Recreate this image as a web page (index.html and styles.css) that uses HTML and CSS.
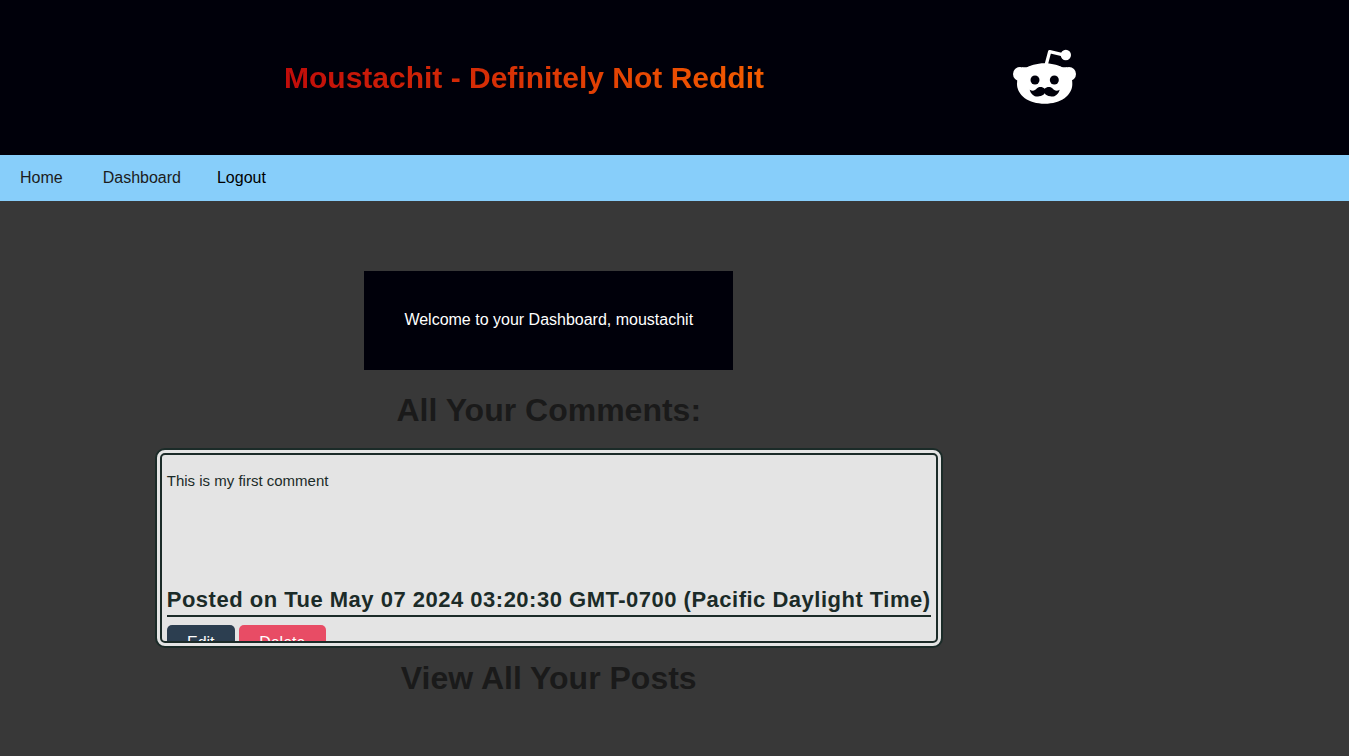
FILE: index.html
```html
<!DOCTYPE html>
<html lang="en">
<head>
<meta charset="utf-8">
<title>Moustachit</title>
<link rel="stylesheet" href="styles.css">
</head>
<body>
<header class="header">
  <h1 class="title">Moustachit - Definitely Not Reddit</h1>
  <svg class="logo" viewBox="0 0 270 225" aria-hidden="true">
    <path class="antenna" d="M138 76 149 35 187 44"/>
    <circle cx="197.500" cy="45" r="15.500"/>
    <circle cx="60" cy="102" r="21"/>
    <circle cx="207" cy="102" r="21"/>
    <path d="M134 70C182 70 217 96 217 131C217 166 182 191 134 191C86 191 51 166 51 131C51 96 86 70 134 70Z"/>
    <path d="M66 82H80L92 78 68 120ZM188 82H202L200 120 176 78Z"/>
    <circle class="face" cx="105" cy="120" r="13.500"/>
    <circle class="face" cx="163" cy="120" r="13.500"/>
    <path class="face" d="M134 146C128 140 117 139 111 145C105 152 98 155 89 149C93 164 105 172 117 169C125 168 131 165 134 160C137 165 143 168 151 169C163 172 175 164 179 149C170 155 163 152 157 145C151 139 140 140 134 146Z"/>
  </svg>
</header>
<nav class="nav">
  <a class="nav-link">Home</a>
  <a class="nav-link">Dashboard</a>
  <button class="logout">Logout</button>
</nav>
<main class="dashboard">
  <p class="welcome">Welcome to your Dashboard, moustachit</p>
  <h2 class="heading">All Your Comments:</h2>
  <article class="comment">
    <p class="comment-text">This is my first comment</p>
    <h3 class="posted">Posted on Tue May 07 2024 03:20:30 GMT-0700 (Pacific Daylight Time)</h3>
    <div class="actions">
      <button class="btn edit">Edit</button>
      <button class="btn delete">Delete</button>
    </div>
  </article>
  <h2 class="heading posts">View All Your Posts</h2>
</main>
</body>
</html>
```
FILE: styles.css
```css
* { box-sizing: border-box; margin: 0; }
body {
  font-family: "Liberation Sans", Arial, sans-serif;
  font-size: 16px;
  background: #383838;
  height: 756px;
  overflow: hidden;
}
.header {
  display: flex;
  align-items: center;
  height: 155px;
  padding-left: 284px;
  background: #00000a;
}
.title {
  font-size: 30px;
  line-height: 36px;
  white-space: nowrap;
  width: 480px;
  color: transparent;
  background: linear-gradient(to right, #c00c0a, #f45c00);
  -webkit-background-clip: text;
  background-clip: text;
}
.logo { width: 90px; height: 75px; margin-left: 236px; fill: #fff; }
.antenna { fill: none; stroke: #fff; stroke-width: 10; stroke-linejoin: round; }
.face { fill: #00000a; }
.nav {
  display: flex;
  align-items: center;
  height: 46px;
  padding-left: 20px;
  background: #87cefa;
}
.nav-link { color: #1c1c1c; margin-right: 40px; }
.logout {
  font: inherit;
  color: #000;
  border: 0;
  padding: 0;
  background: none;
  margin-left: -4px;
}
.dashboard {
  width: 1097.5px;
  padding-top: 70px;
  display: flex;
  flex-direction: column;
  align-items: center;
}
.welcome {
  width: 369px;
  height: 99px;
  line-height: 97px;
  text-align: center;
  color: #fff;
  background: #00000a;
}
.heading {
  color: #1a1a1a;
  font-size: 32px;
  line-height: 38px;
  margin: 21px 0 19px;
}
.posts { margin-top: 11px; }
.comment {
  width: 788px;
  height: 200px;
  border: 7px double #1b2b28;
  border-radius: 10px;
  padding: 0 5px;
  background: #e4e4e4;
  color: #1b2b28;
  overflow: hidden;
}
.comment-text { height: 129px; padding-top: 17px; font-size: 15px; line-height: 18px; }
.posted {
  font-size: 22px;
  letter-spacing: 0.5px;
  line-height: 31px;
  height: 33px;
  white-space: nowrap;
  border-bottom: 2px solid #1b2b28;
}
.actions { display: flex; gap: 4px; margin-top: 8px; }
.btn {
  font: inherit;
  height: 35px;
  color: #fff;
  border: 0;
  border-radius: 5px;
  padding: 0;
}
.edit { width: 68px; background: #2c3e50; }
.delete { width: 87px; background: #e84c65; }
```
